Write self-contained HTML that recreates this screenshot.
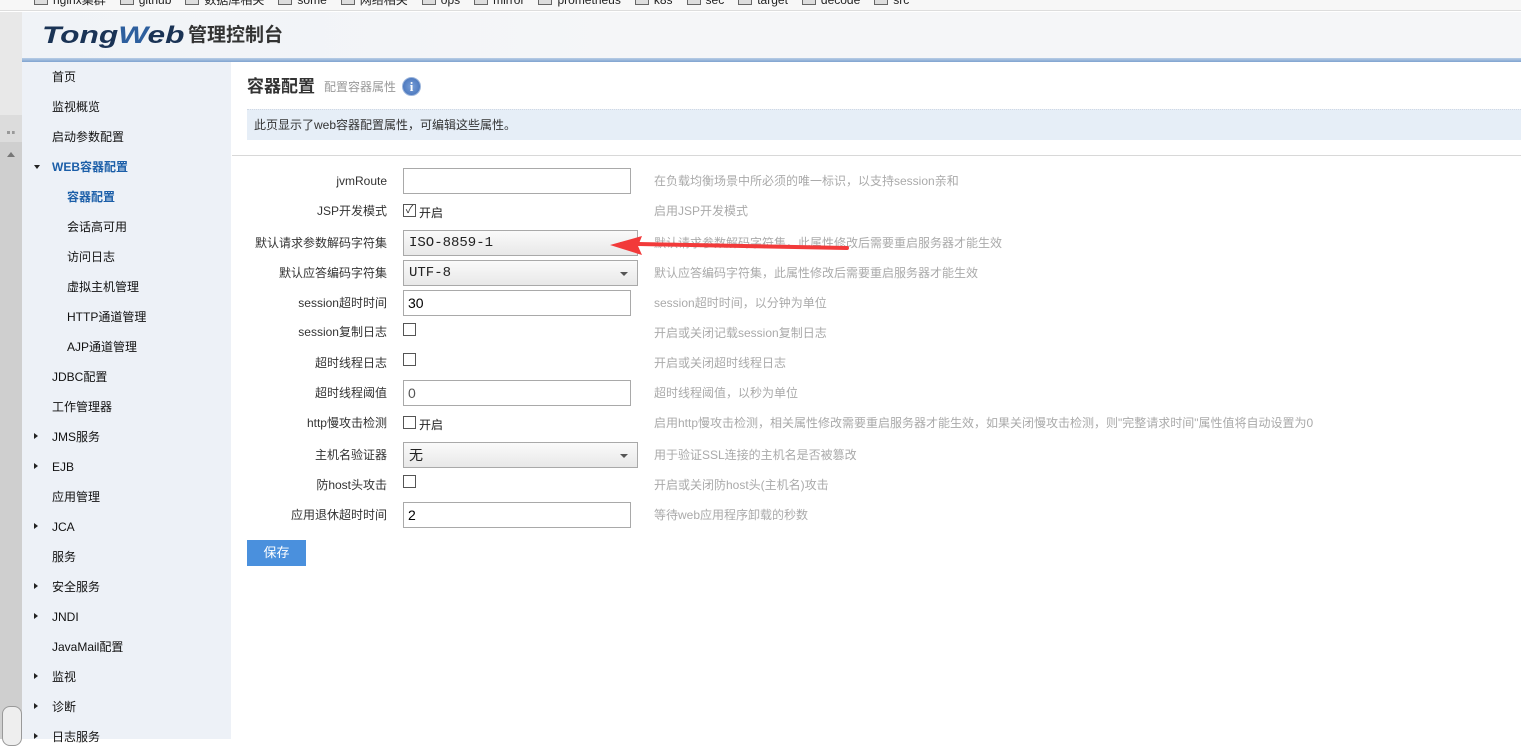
<!DOCTYPE html>
<html><head><meta charset="utf-8">
<style>
*{margin:0;padding:0;box-sizing:border-box}
body{width:1521px;height:739px;overflow:hidden;background:#fff;font-family:"Liberation Sans","Noto Sans CJK SC",sans-serif;font-size:12px;line-height:16px;color:#333;position:relative}
.abs{position:absolute}
#bm{left:0;top:0;width:1521px;height:11px;background:#f7f7f7;border-bottom:1px solid #ddd;overflow:hidden}
#bm span{display:inline-block;margin-left:14px;font-size:12px;color:#222;position:relative;top:-8px}
#bm span:before{content:"";display:inline-block;width:12px;height:10px;border:1px solid #666;background:#ddd;margin-right:5px;vertical-align:-1px}
#strip{left:0;top:12px;width:22px;height:727px;background:#cfcfcf}
#hdr{left:22px;top:12px;width:1499px;height:46px;background:linear-gradient(90deg,#f0f3f7,#f5f6f8 40%,#f5f6f8)}
#blue{left:22px;top:58px;width:1499px;height:4px;background:linear-gradient(#b8cde6,#7fa3d0)}
#side{left:22px;top:62px;width:209px;height:677px;background:#edf1f7}
.nav{position:absolute;left:30px;font-size:12px;line-height:16px;color:#111;white-space:nowrap}
.sub{left:45px}
.tri{position:absolute;left:12px;width:0;height:0;border-top:3px solid transparent;border-bottom:3px solid transparent;border-left:4px solid #222}
.lab{position:absolute;right:1134px;font-size:12px;line-height:16px;color:#333;text-align:right;white-space:nowrap}
.desc{position:absolute;left:654px;font-size:12px;line-height:16px;color:#aaa;white-space:nowrap}
.inp{position:absolute;left:403px;width:228px;height:26px;border:1px solid #a9a9a9;background:#fff;font-size:14px;line-height:16px;padding:4px 4px;color:#000}
.sel{position:absolute;left:403px;width:235px;height:26px;border:1px solid #a9a9a9;background:linear-gradient(#fafafa,#e8e8e8);font-family:"Liberation Mono","Noto Sans CJK SC",monospace;font-size:14px;line-height:16px;padding:4px 5px;color:#222}
.sel:after{content:"";position:absolute;right:9px;top:11px;border-left:4px solid transparent;border-right:4px solid transparent;border-top:4px solid #555}
.cb{position:absolute;left:403px;width:13px;height:13px;border:1px solid #555;background:#fff}
.cbt{position:absolute;left:419px;font-size:12px;line-height:16px;color:#222}
</style></head><body>
<div id="bm" class="abs"><span style="margin-left:34px">nginx集群</span><span>github</span><span>数据库相关</span><span>some</span><span>网络相关</span><span>ops</span><span>mirror</span><span>prometheus</span><span>k8s</span><span>sec</span><span>target</span><span>decode</span><span>src</span></div>
<div id="strip" class="abs">
 <div class="abs" style="left:0;top:0;width:22px;height:103px;background:#e8e8e8"></div>
 <div class="abs" style="left:0;top:103px;width:22px;height:27px;background:#dcdcdc"></div>
 <div class="abs" style="left:7px;top:114px;width:8px;height:8px;border-bottom:3px dotted #999"></div>
 <div class="abs" style="left:7px;top:140px;border-left:4px solid transparent;border-right:4px solid transparent;border-bottom:5px solid #777"></div>
 <div class="abs" style="left:2px;top:694px;width:20px;height:40px;border:1px solid #999;border-radius:8px;background:#eee"></div>
</div>
<div id="hdr" class="abs">
 <div class="abs" style="left:20px;top:10px;font-family:'Liberation Sans',sans-serif;font-weight:bold;font-style:italic;font-size:24px;line-height:28px;color:#1a3355;transform:scaleX(1.32);transform-origin:0 0">Tong<span style="color:#2d5f9e">W</span>eb</div>
 <div class="abs" style="left:166px;top:12px;font-size:19px;line-height:24px;color:#333;font-weight:bold">管理控制台</div>
</div>
<div id="blue" class="abs"></div>
<div id="side" class="abs">
 <div class="nav" style="top:7px">首页</div>
 <div class="nav" style="top:37px">监视概览</div>
 <div class="nav" style="top:67px">启动参数配置</div>
 <div class="abs" style="left:12px;top:103px;border-left:3px solid transparent;border-right:3px solid transparent;border-top:4px solid #222"></div>
 <div class="nav" style="top:97px;color:#1b5ea8;font-weight:bold">WEB容器配置</div>
 <div class="nav sub" style="top:127px;color:#1b5ea8;font-weight:bold">容器配置</div>
 <div class="nav sub" style="top:157px">会话高可用</div>
 <div class="nav sub" style="top:187px">访问日志</div>
 <div class="nav sub" style="top:217px">虚拟主机管理</div>
 <div class="nav sub" style="top:247px">HTTP通道管理</div>
 <div class="nav sub" style="top:277px">AJP通道管理</div>
 <div class="nav" style="top:307px">JDBC配置</div>
 <div class="nav" style="top:337px">工作管理器</div>
 <div class="tri" style="top:371px"></div><div class="nav" style="top:367px">JMS服务</div>
 <div class="tri" style="top:401px"></div><div class="nav" style="top:397px">EJB</div>
 <div class="nav" style="top:427px">应用管理</div>
 <div class="tri" style="top:461px"></div><div class="nav" style="top:457px">JCA</div>
 <div class="nav" style="top:487px">服务</div>
 <div class="tri" style="top:521px"></div><div class="nav" style="top:517px">安全服务</div>
 <div class="tri" style="top:551px"></div><div class="nav" style="top:547px">JNDI</div>
 <div class="nav" style="top:577px">JavaMail配置</div>
 <div class="tri" style="top:611px"></div><div class="nav" style="top:607px">监视</div>
 <div class="tri" style="top:641px"></div><div class="nav" style="top:637px">诊断</div>
 <div class="tri" style="top:671px"></div><div class="nav" style="top:667px">日志服务</div>
</div>
<div class="abs" style="left:247px;top:76px;font-size:17px;line-height:22px;font-weight:bold;color:#333">容器配置</div>
<div class="abs" style="left:324px;top:79px;font-size:12px;color:#999">配置容器属性</div>
<div class="abs" style="left:402px;top:77px;width:19px;height:19px;border-radius:50%;background:radial-gradient(#7aa0d8,#3d6bb5);border:1px solid #9db6dc;color:#fff;font-weight:bold;font-size:13px;text-align:center;line-height:17px;font-family:'Liberation Serif',serif">i</div>
<div class="abs" style="left:247px;top:109px;width:1274px;height:31px;background:#e6eef7;border-top:1px dotted #d0d8e4"></div>
<div class="abs" style="left:254px;top:117px;font-size:12px;color:#333">此页显示了web容器配置属性，可编辑这些属性。</div>
<div class="abs" style="left:232px;top:155px;width:1289px;height:1px;background:#d8d8d8"></div>

<div class="lab" style="top:173px">jvmRoute</div>
<div class="inp" style="top:168px"></div>
<div class="desc" style="top:173px">在负载均衡场景中所必须的唯一标识，以支持session亲和</div>

<div class="lab" style="top:203px">JSP开发模式</div>
<div class="cb" style="top:204px;font-size:11px;line-height:10px;text-align:center">✓</div><div class="cbt" style="top:205px">开启</div>
<div class="desc" style="top:203px">启用JSP开发模式</div>

<div class="lab" style="top:235px">默认请求参数解码字符集</div>
<div class="sel" style="top:230px">ISO-8859-1</div>
<div class="desc" style="top:235px">默认请求参数解码字符集，此属性修改后需要重启服务器才能生效</div>

<div class="lab" style="top:265px">默认应答编码字符集</div>
<div class="sel" style="top:260px">UTF-8</div>
<div class="desc" style="top:265px">默认应答编码字符集，此属性修改后需要重启服务器才能生效</div>

<div class="lab" style="top:295px">session超时时间</div>
<div class="inp" style="top:290px">30</div>
<div class="desc" style="top:295px">session超时时间，以分钟为单位</div>

<div class="lab" style="top:324px">session复制日志</div>
<div class="cb" style="top:323px"></div>
<div class="desc" style="top:325px">开启或关闭记载session复制日志</div>

<div class="lab" style="top:355px">超时线程日志</div>
<div class="cb" style="top:353px"></div>
<div class="desc" style="top:355px">开启或关闭超时线程日志</div>

<div class="lab" style="top:385px">超时线程阈值</div>
<div class="inp" style="top:380px;color:#555">0</div>
<div class="desc" style="top:385px">超时线程阈值，以秒为单位</div>

<div class="lab" style="top:415px">http慢攻击检测</div>
<div class="cb" style="top:416px"></div><div class="cbt" style="top:417px">开启</div>
<div class="desc" style="top:415px">启用http慢攻击检测，相关属性修改需要重启服务器才能生效，如果关闭慢攻击检测，则"完整请求时间"属性值将自动设置为0</div>

<div class="lab" style="top:447px">主机名验证器</div>
<div class="sel" style="top:442px;font-family:'Liberation Sans','Noto Sans CJK SC',sans-serif">无</div>
<div class="desc" style="top:447px">用于验证SSL连接的主机名是否被篡改</div>

<div class="lab" style="top:477px">防host头攻击</div>
<div class="cb" style="top:475px"></div>
<div class="desc" style="top:477px">开启或关闭防host头(主机名)攻击</div>

<div class="lab" style="top:507px">应用退休超时时间</div>
<div class="inp" style="top:502px">2</div>
<div class="desc" style="top:507px">等待web应用程序卸载的秒数</div>

<div class="abs" style="left:247px;top:540px;width:59px;height:26px;background:#4a90dd;color:#fff;font-size:13px;text-align:center;line-height:26px">保存</div>

<svg class="abs" style="left:600px;top:232px" width="260" height="30">
 <path d="M38 12 L247 16" stroke="#f23a3a" stroke-width="4" stroke-linecap="round"/>
 <path d="M10 13 L42 4 L38 14 L42 23 Z" fill="#f23a3a"/>
</svg>
</body></html>
